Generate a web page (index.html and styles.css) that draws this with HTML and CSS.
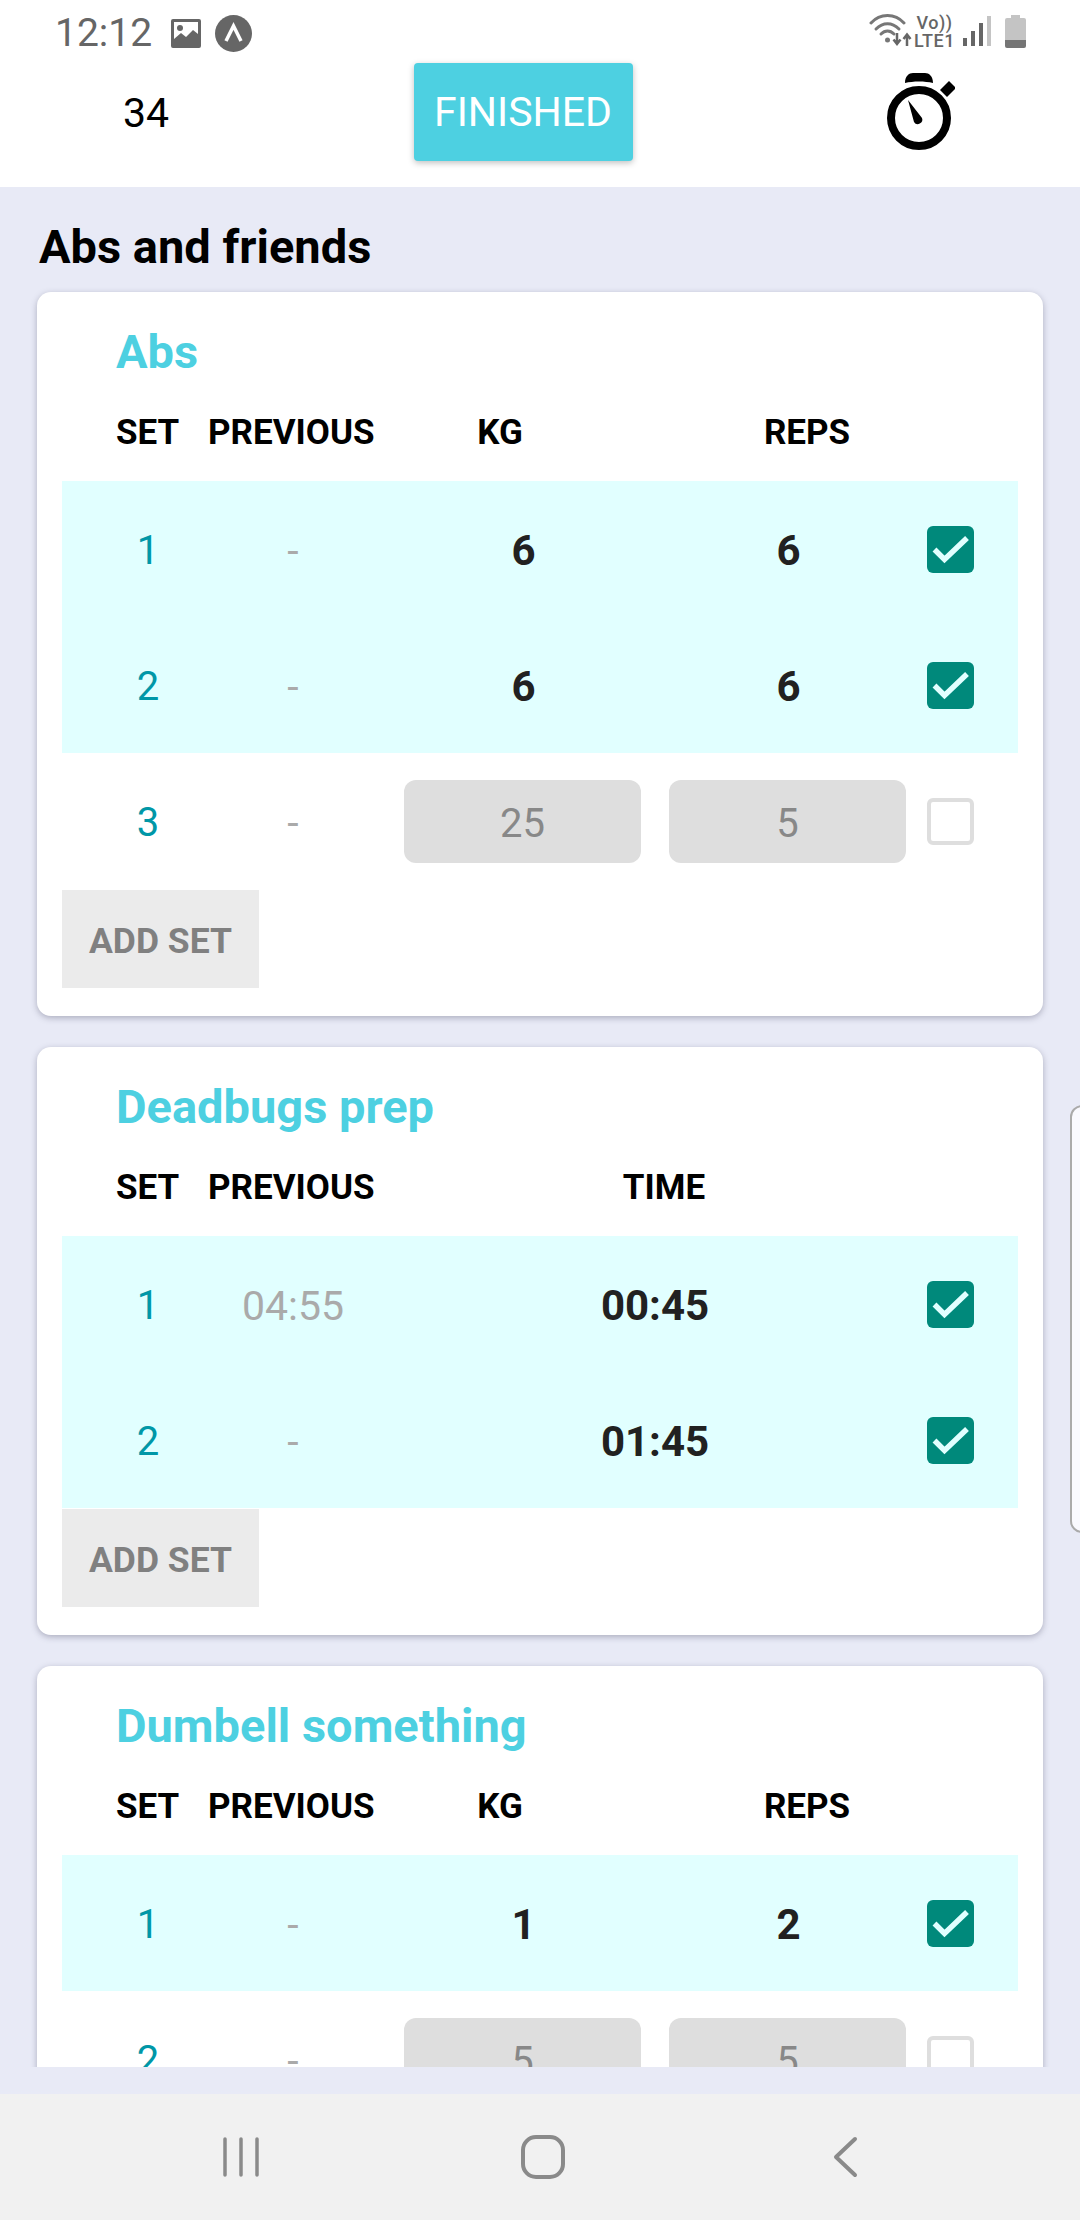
FILE: index.html
```html
<!DOCTYPE html>
<html lang="en">
<head>
<meta charset="utf-8">
<title>Abs and friends</title>
<link rel="stylesheet" href="styles.css">
</head>
<body>
<svg class="defs" width="0" height="0" aria-hidden="true">
  <symbol id="tick" viewBox="0 0 47 47">
    <rect width="47" height="47" rx="6" fill="#00897b"/>
    <path d="M7.5 23.5 17.5 33.5 40 12" fill="none" stroke="#e1ffff" stroke-width="5.5"/>
  </symbol>
</svg>
<div class="app">
  <header class="top">
    <div class="status">
      <div class="status-left">
        <span class="clock">12:12</span>
        <svg class="st-img" width="30" height="29" viewBox="0 0 30 29"><path fill="#666" fill-rule="evenodd" d="M2 0h26a2 2 0 0 1 2 2v25a2 2 0 0 1-2 2H2a2 2 0 0 1-2-2V2a2 2 0 0 1 2-2zM3 3v17l7-6 5 4 7-7 5 4V3z"/><circle cx="9" cy="9" r="3" fill="#666"/></svg>
        <svg class="st-nav" width="37" height="37" viewBox="0 0 37 37"><circle cx="18.500" cy="18.500" r="18.500" fill="#666"/><path d="M11 26 18.500 11 26 26" fill="none" stroke="#fff" stroke-width="3.500"/></svg>
      </div>
      <div class="status-right">
        <svg width="44" height="34" viewBox="0 0 44 34"><g fill="none" stroke="#777" stroke-width="3" stroke-linecap="round"><path d="M2 9C11-1 26-1 35 9"/><path d="M7 15C14 8 23 8 30 15"/><path d="M12 20C16 16 21 16 25 20"/></g><circle cx="18.500" cy="26" r="2.500" fill="#777"/><path d="M28 19v10M24.500 25.500 28 30l3.500-4.500M38 32V21M34.500 25 38 20.500 41.500 25" fill="none" stroke="#666" stroke-width="2.500"/></svg>
        <div class="lte">
          <span class="vo">Vo))</span>
          <span class="lte1">LTE1</span>
        </div>
        <svg class="st-bars" width="28" height="30" viewBox="0 0 28 30"><rect x="0" y="22" width="4" height="8" fill="#666"/><rect x="8" y="15" width="4" height="15" fill="#666"/><rect x="16" y="7" width="4" height="23" fill="#666"/><rect x="24" y="0" width="4" height="30" fill="#c4c4c4"/></svg>
        <svg class="st-batt" width="21" height="33" viewBox="0 0 21 33"><path fill="#c4c4c4" d="M6 0h9v3h4a2 2 0 0 1 2 2v20H0V5a2 2 0 0 1 2-2h4z"/><path fill="#757575" d="M0 25h21v6a2 2 0 0 1-2 2H2a2 2 0 0 1-2-2z"/></svg>
      </div>
    </div>
    <div class="toolbar">
      <span class="elapsed">34</span>
      <button class="finish">FINISHED</button>
      <svg class="watch" width="68" height="78" viewBox="0 0 68 78"><circle cx="32" cy="45" r="28" fill="none" stroke="#000" stroke-width="8"/><path d="M18 10c0-7 4-10 8-10h12c4 0 8 3 8 10-8-2-20-2-28 0z"/><path d="M53 17l9-9 7 7-9 9z"/><path d="M21 27l14 18a4.500 4.500 0 0 1-8 4z"/></svg>
    </div>
  </header>

  <main class="scroll">
    <h1 class="workout">Abs and friends</h1>

    <section class="card">
      <h2 class="ex-title">Abs</h2>
      <div class="head head-reps"><span>SET</span><span>PREVIOUS</span><span class="hc">KG</span><span class="hc">REPS</span></div>
      <div class="row done"><span class="num">1</span><span class="prev">-</span><span class="val kg">6</span><span class="val reps">6</span><svg class="box" viewBox="0 0 47 47"><use href="#tick"/></svg></div>
      <div class="row done"><span class="num">2</span><span class="prev">-</span><span class="val kg">6</span><span class="val reps">6</span><svg class="box" viewBox="0 0 47 47"><use href="#tick"/></svg></div>
      <div class="row"><span class="num">3</span><span class="prev">-</span><div class="kg"><div class="field">25</div></div><div class="reps"><div class="field">5</div></div><span class="box empty"></span></div>
      <button class="add">ADD SET</button>
    </section>

    <section class="card">
      <h2 class="ex-title">Deadbugs prep</h2>
      <div class="head head-time"><span>SET</span><span>PREVIOUS</span><span class="hc">TIME</span></div>
      <div class="row done"><span class="num">1</span><span class="prev">04:55</span><span class="val time">00:45</span><svg class="box" viewBox="0 0 47 47"><use href="#tick"/></svg></div>
      <div class="row done"><span class="num">2</span><span class="prev">-</span><span class="val time">01:45</span><svg class="box" viewBox="0 0 47 47"><use href="#tick"/></svg></div>
      <button class="add">ADD SET</button>
    </section>

    <section class="card">
      <h2 class="ex-title">Dumbell something</h2>
      <div class="head head-reps"><span>SET</span><span>PREVIOUS</span><span class="hc">KG</span><span class="hc">REPS</span></div>
      <div class="row done"><span class="num">1</span><span class="prev">-</span><span class="val kg">1</span><span class="val reps">2</span><svg class="box" viewBox="0 0 47 47"><use href="#tick"/></svg></div>
      <div class="row"><span class="num">2</span><span class="prev">-</span><div class="kg"><div class="field">5</div></div><div class="reps"><div class="field">5</div></div><span class="box empty"></span></div>
    </section>
  </main>
  <div class="band"></div>

  <nav class="nav">
    <svg width="48" height="44" viewBox="0 0 48 44"><g fill="none" stroke="#8a8a8a" stroke-width="3.500" stroke-linecap="round"><path d="M8 4v36M24 4v36M40 4v36"/></g></svg>
    <svg width="48" height="44" viewBox="0 0 48 44"><rect x="4" y="2" width="40" height="40" rx="13" fill="none" stroke="#8a8a8a" stroke-width="4"/></svg>
    <svg width="48" height="44" viewBox="0 0 48 44"><path d="M34 4 15 22l19 18" fill="none" stroke="#8a8a8a" stroke-width="4" stroke-linecap="round" stroke-linejoin="round"/></svg>
  </nav>
  <div class="handle"></div>
</div>
</body>
</html>
```
FILE: styles.css
```css
* { box-sizing: border-box; }
html, body { margin: 0; padding: 0; }
body { font-family: Roboto, "Liberation Sans", sans-serif; background: #e8eaf6; }
.defs { position: absolute; }
.app { position: relative; width: 1080px; height: 2220px; display: flex; flex-direction: column; overflow: hidden; background: #e8eaf6; }

.top { height: 187px; flex: none; background: #fff; }
.status { height: 55px; display: flex; justify-content: space-between; align-items: flex-start; padding: 14px 54px 0 55px; }
.status-left { display: flex; align-items: center; gap: 14px; }
.clock { font-size: 39px; line-height: 38px; color: #666; }
.st-img { margin-left: 5px; }
.status-right { display: flex; align-items: flex-start; }
.lte { display: flex; flex-direction: column; align-items: center; margin-left: 1px; color: #666; font-weight: 500; line-height: 18px; font-size: 18px; letter-spacing: .5px; }
.st-bars { margin: 2px 0 0 8px; }
.st-batt { margin: 1px 0 0 14px; }

.toolbar { height: 114px; display: grid; grid-template-columns: 292px 462px 1fr; align-items: center; justify-items: center; }
.elapsed { font-size: 41px; color: #000; padding-top: 2px; }
.finish { width: 219px; height: 98px; border: 0; padding: 0; border-radius: 4px; background: #4dd0e1; color: #fff; font: 400 41px Roboto, sans-serif; box-shadow: 0 2px 6px rgba(0,0,0,.25); }
.watch { margin-left: 8px; }

.scroll { flex: 1; min-height: 0; overflow: hidden; padding: 30px 37px 0; display: flex; flex-direction: column; gap: 31px; }
.workout { margin: 0 0 -16px 2px; font-size: 47px; line-height: 60px; font-weight: 700; color: #000; }
.card { flex: none; background: #fff; border-radius: 14px; padding: 0 25px 28px 25px; box-shadow: 0 2px 6px rgba(60,60,90,.35); }
.ex-title { margin: 0; height: 100px; padding: 32px 0 0 54px; font-size: 47px; line-height: 56px; font-weight: 700; color: #4dd0e1; }
.head { height: 89px; display: grid; align-items: center; padding-left: 54px; font-size: 35px; font-weight: 700; color: #000; margin-top: -4px; margin-bottom: 4px; }
.head-reps { grid-template-columns: 92px 165px 254px 360px; }
.head-time { grid-template-columns: 92px 165px 582px; }
.hc { text-align: center; }

.row { height: 136px; display: grid; grid-template-columns: 170px 122px 287px 265px 88px 24px; align-items: center; }
.row.done { background: #e1ffff; }
.num { text-align: center; font-size: 40px; color: #0097a7; font-weight: 400; padding: 3px 0 0 2px; }
.prev { text-align: center; font-size: 41px; color: #aaa; padding-top: 3px; }
.val { text-align: center; font-size: 42px; font-weight: 700; color: #212121; padding-top: 3px; }
.val.kg { padding-left: 52px; }
.val.reps { padding-left: 30px; }
.kg { padding-left: 50px; }
.reps { padding-left: 28px; }
.time { grid-column: 3 / 5; padding-left: 50px; }
.field { height: 83px; line-height: 83px; padding-top: 2px; background: #dedede; border-radius: 12px; text-align: center; font-size: 40px; color: #888; }
.box { width: 47px; height: 47px; justify-self: center; grid-column: 5; }
.box.empty { display: block; border: 4px solid #dedede; border-radius: 6px; background: #fff; }
.add { display: block; width: 197px; height: 98px; margin-top: 1px; border: 0; padding: 3px 0 0; background: #ebebeb; color: #808080; font: 700 35.500px Roboto, sans-serif; }

.band { height: 27px; flex: none; }
.nav { height: 126px; flex: none; background: #f1f1f1; display: flex; justify-content: center; align-items: center; gap: 254px; padding-left: 6px; }
.handle { position: absolute; right: -14px; top: 1105px; width: 24px; height: 428px; background: #f9f9fe; border: 2px solid #aaa; border-radius: 14px; }
```
